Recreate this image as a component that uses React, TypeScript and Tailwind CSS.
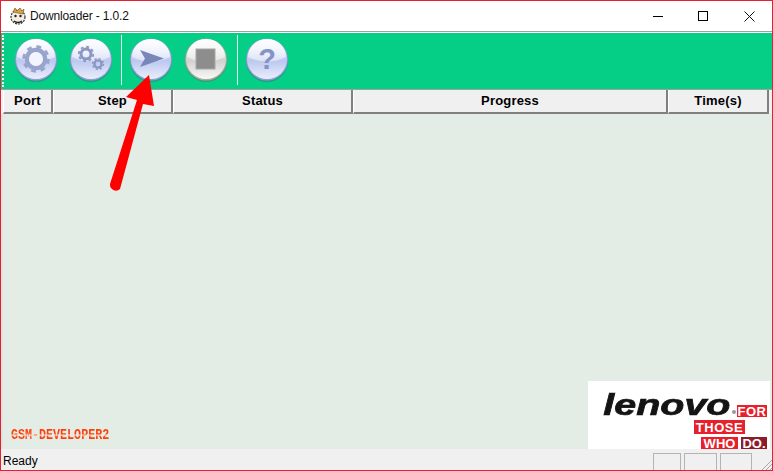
const sans = "font-['Liberation_Sans',Arial,sans-serif]";

const columns = [
  { label: "Port", width: "w-[50px]" },
  { label: "Step", width: "w-[120px]" },
  { label: "Status", width: "w-[180px]" },
  { label: "Progress", width: "w-[315px]" },
  { label: "Time(s)", width: "w-[101px]" },
];

function Gear({ cx, cy, r, w, color }: { cx: number; cy: number; r: number; w: number; color: string }) {
  const teeth = 2 * Math.PI * (r + w * 0.75);
  return (
    <g fill="none" stroke={color}>
      <circle cx={cx} cy={cy} r={r} strokeWidth={w} />
      <circle cx={cx} cy={cy} r={r + w * 0.75} strokeWidth={w * 0.6} strokeDasharray={`${teeth / 16} ${teeth / 16}`} />
    </g>
  );
}

function Ball({ id, grey, children }: { id: string; grey?: boolean; children: React.ReactNode }) {
  const edge = grey ? "#a8a8a4" : "#8d9dd0";
  return (
    <svg width="44" height="46" viewBox="0 0 44 46" className="mt-[2px] block shrink-0">
      <defs>
        <linearGradient id={id} x1="0" y1="0" x2="0" y2="1">
          <stop offset="0" stopColor={grey ? "#ececea" : "#e6ebfb"} />
          <stop offset="0.55" stopColor={grey ? "#d2d2d0" : "#bcc8ef"} />
          <stop offset="1" stopColor={grey ? "#f8f8f6" : "#eaeefc"} />
        </linearGradient>
        <linearGradient id={`${id}-gloss`} x1="0" y1="0" x2="0" y2="1">
          <stop offset="0" stopColor="#ffffff" stopOpacity="0.95" />
          <stop offset="1" stopColor="#ffffff" stopOpacity="0.45" />
        </linearGradient>
      </defs>
      <circle cx="22" cy="24" r="21" fill={grey ? "#66705f" : "#3f6a90"} opacity="0.5" />
      <circle cx="22" cy="22.5" r="21" fill={edge} />
      <circle cx="22" cy="22" r="20" fill={`url(#${id})`} />
      <path d="M3 20 A19 18 0 0 1 41 20 Q22 29 3 20 Z" fill={`url(#${id}-gloss)`} />
      {children}
    </svg>
  );
}

function WindowIcon() {
  return (
    <svg width="18" height="18" viewBox="0 0 18 18" className="shrink-0">
      <circle cx="9" cy="10" r="7" fill="#f3eee0" stroke="#333" strokeWidth="1.2" strokeDasharray="2 1" />
      <path d="M4 5 L6 1 L8 4 L11 1 L13 4 L15 2 L14 7 Z" fill="#d9a441" stroke="#6b4a15" strokeWidth="0.6" />
      <circle cx="6.5" cy="9" r="1.2" fill="#222" />
      <circle cx="11.5" cy="9" r="1.2" fill="#222" />
      <path d="M5 14 Q9 17 13 14" stroke="#222" strokeWidth="1.5" fill="none" />
    </svg>
  );
}

function LenovoLogo() {
  return (
    <div className="mr-[2px] flex h-[68px] w-[182px] flex-col items-end bg-white pr-[3px]">
      <div className="mt-[12px] flex items-end">
        <span className="origin-right scale-x-[1.36] text-[29px] leading-[24px] font-bold text-[#141414] italic [-webkit-text-stroke:0.7px_#141414]">lenovo</span>
        <span className="mr-[1px] ml-[2px] mb-[3px] h-[4px] w-[4px] rounded-full bg-[#999]" />
        <span className="flex h-[12px] w-[30px] items-center justify-center bg-[#e8202c] text-[13px] leading-none font-bold tracking-[0.5px] text-white">FOR</span>
      </div>
      <div className="mt-[3px] mr-[22px] flex h-[14px] w-[51px] items-center justify-center bg-[#e8202c] text-[13px] leading-none font-bold tracking-[0.5px] text-white">THOSE</div>
      <div className="mt-[3px] flex gap-[3px]">
        <span className="flex h-[12px] w-[37px] items-center justify-center bg-[#e8202c] text-[13px] leading-none font-bold text-white">WHO</span>
        <span className="flex h-[12px] w-[26px] items-center justify-center bg-[#8c1c2a] text-[13px] leading-none font-bold text-white">DO.</span>
      </div>
    </div>
  );
}

export default function App() {
  return (
    <div className={`relative flex h-[471px] w-[773px] flex-col overflow-hidden border border-[#e81e34] bg-white ${sans}`}>
      {/* title bar */}
      <div className="flex h-[30px] shrink-0 items-center">
        <div className="ml-[8px] flex items-center gap-[3px]">
          <WindowIcon />
          <span className="text-[12px] tracking-[-0.15px] text-[#111]">Downloader - 1.0.2</span>
        </div>
        <div className="ml-auto flex items-center">
          <div className="flex h-[30px] w-[46px] items-center justify-center">
            <div className="ml-[2px] h-px w-[10px] bg-black" />
          </div>
          <div className="flex h-[30px] w-[46px] items-center justify-center">
            <div className="h-[10px] w-[10px] border border-black" />
          </div>
          <div className="flex h-[30px] w-[46px] items-center justify-center">
            <svg width="11" height="11" viewBox="0 0 11 11">
              <path d="M0.5 0.5 L10.5 10.5 M10.5 0.5 L0.5 10.5" stroke="#111" strokeWidth="1" />
            </svg>
          </div>
        </div>
      </div>
      <div className="h-px shrink-0 bg-[#a0a0a0]" />

      {/* toolbar */}
      <div className="flex h-[57px] shrink-0 items-start border-t border-white bg-[#05cf87] pt-[2px] pl-[1px]">
        <div className="h-[52px] w-[3px] border-l-2 border-dotted border-white" />
        <div className="ml-[9px] flex items-start gap-[11px]">
          <Ball id="b1">
            <Gear cx={22} cy={22} r={9} w={4.5} color="#98a4cd" />
            <circle cx="22" cy="22" r="7" fill="#f2f5fd" />
          </Ball>
          <Ball id="b2">
            <Gear cx={17} cy={17} r={5} w={3} color="#8b97c2" />
            <Gear cx={29} cy={27} r={3.6} w={2.4} color="#8b97c2" />
          </Ball>
        </div>
        <div className="mr-[7px] ml-[8px] h-[50px] w-px bg-[#e6f5ee]" />
        <div className="flex items-start gap-[11px]">
          <Ball id="b3">
            <path d="M11 13 L35 21.5 L11 30 L16 21.5 Z" fill="#7687b8" />
          </Ball>
          <Ball id="b4" grey>
            <rect x="12" y="12" width="19" height="20" fill="#8d8d8d" stroke="#a8a8a8" />
          </Ball>
        </div>
        <div className="mr-[7px] ml-[9px] h-[50px] w-px bg-[#e6f5ee]" />
        <Ball id="b5">
          <text x="22" y="32" textAnchor="middle" fontSize="29" fontWeight="700" fill="#8593c6" fontFamily="'Liberation Sans', Arial, sans-serif">?</text>
        </Ball>
      </div>

      {/* table header */}
      <div className="flex h-[25px] shrink-0 border-t border-[#a0a0a0] bg-[#f0f0f0] pl-[2px]">
        {columns.map((col) => (
          <div
            key={col.label}
            className={`${col.width} flex items-center justify-center border-r-2 border-b-2 border-l border-r-[#808080] border-b-[#808080] border-l-white text-[13px] font-bold tracking-[0.2px] text-black`}
          >
            {col.label}
          </div>
        ))}
      </div>

      {/* list body */}
      <div className="flex min-h-0 flex-1 items-end justify-between border-l-2 border-[#dfe4df] bg-[#e3ede5]">
        <span className="mb-[6px] ml-[8px] origin-bottom scale-y-[1.3] bg-[linear-gradient(#ff3d0a_0_44%,#ffa585_44%_56%,#ff3d0a_56%)] bg-clip-text font-['Liberation_Mono',monospace] text-[11.7px] leading-[12px] font-bold text-transparent">
          GSM-DEVELOPER2
        </span>
        <LenovoLogo />
      </div>

      {/* status bar */}
      <div className="flex h-[21px] shrink-0 items-end bg-[#f0f0f0]">
        <span className="ml-[2px] text-[12px] leading-[17px] text-black">Ready</span>
        <div className="mr-[20px] ml-auto flex gap-[3px]">
          <div className="h-[17px] w-[28px] border border-b-0 border-[#b4b4b4]" />
          <div className="h-[17px] w-[33px] border border-b-0 border-[#b4b4b4]" />
          <div className="h-[17px] w-[32px] border border-b-0 border-[#b4b4b4]" />
        </div>
        <svg width="11" height="11" viewBox="0 0 11 11" className="absolute right-0 bottom-0">
          <path d="M1 11 L11 1 M5 11 L11 5 M9 11 L11 9" stroke="#a8a8a8" strokeWidth="1" />
        </svg>
      </div>

      {/* red annotation arrow over the window */}
      <svg width="773" height="471" viewBox="0 0 773 471" className="pointer-events-none absolute -top-px -left-px">
        <path d="M149 75 L126 97 L137 100 L110 184 A6 6 0 0 0 120 189 L143 104 L154 106 Z" fill="#ff0000" />
      </svg>
    </div>
  );
}
